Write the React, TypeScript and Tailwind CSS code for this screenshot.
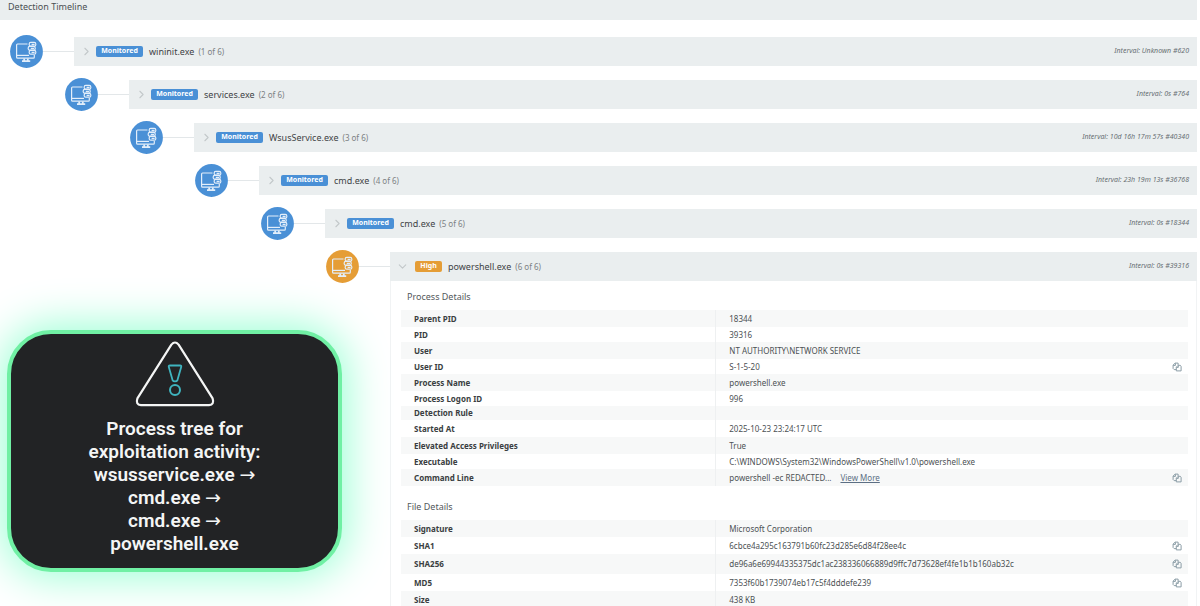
import { LuChevronDown, LuChevronRight } from "react-icons/lu";

const processes = [
    { name: "wininit.exe", interval: "Interval: Unknown #620", indent: "pl-[10px]", level: "Monitored" },
    { name: "services.exe", interval: "Interval: 0s #764", indent: "pl-[65px]", level: "Monitored" },
    { name: "WsusService.exe", interval: "Interval: 10d 16h 17m 57s #40340", indent: "pl-[130px]", level: "Monitored" },
    { name: "cmd.exe", interval: "Interval: 23h 19m 13s #36768", indent: "pl-[195px]", level: "Monitored" },
    { name: "cmd.exe", interval: "Interval: 0s #18344", indent: "pl-[261px]", level: "Monitored" },
    { name: "powershell.exe", interval: "Interval: 0s #39316", indent: "pl-[326px]", level: "High" },
]

type Row = { label: string; value: string; height: string; copy?: boolean; more?: boolean }

const processDetails: Row[] = [
    { label: "Parent PID", value: "18344", height: "h-[17px]" },
    { label: "PID", value: "39316", height: "h-[15px]" },
    { label: "User", value: "NT AUTHORITY\\NETWORK SERVICE", height: "h-[17px]" },
    { label: "User ID", value: "S-1-5-20", height: "h-[15px]", copy: true },
    { label: "Process Name", value: "powershell.exe", height: "h-[17px]" },
    { label: "Process Logon ID", value: "996", height: "h-[15px]" },
    { label: "Detection Rule", value: "", height: "h-[14px]" },
    { label: "Started At", value: "2025-10-23 23:24:17 UTC", height: "h-[17px]" },
    { label: "Elevated Access Privileges", value: "True", height: "h-[17px]" },
    { label: "Executable", value: "C:\\WINDOWS\\System32\\WindowsPowerShell\\v1.0\\powershell.exe", height: "h-[15px]" },
    { label: "Command Line", value: "powershell -ec REDACTED...", height: "h-[17px]", copy: true, more: true },
]

const fileDetails: Row[] = [
    { label: "Signature", value: "Microsoft Corporation", height: "h-[17px]" },
    { label: "SHA1", value: "6cbce4a295c163791b60fc23d285e6d84f28ee4c", height: "h-[17px]", copy: true },
    { label: "SHA256", value: "de96a6e69944335375dc1ac238336066889d9ffc7d73628ef4fe1b1b160ab32c", height: "h-[20px]", copy: true },
    { label: "MD5", value: "7353f60b1739074eb17c5f4dddefe239", height: "h-[17px]", copy: true },
    { label: "Size", value: "438 KB", height: "h-[17px]" },
]

const ComputerIcon = ({ high }: { high: boolean }) => (
    <svg viewBox="0 0 33 33" className="w-[33px] h-[33px] shrink-0" fill="none">
        <circle cx="16.5" cy="16.5" r="16.4" fill={high ? "#e59d36" : "#4a90d6"} />
        <g stroke="#e3eefa" strokeWidth="1.2" strokeLinejoin="round">
            <path d="M17.5 9H7.5Q6.6 9 6.6 9.9V22.2Q6.6 23.2 7.6 23.2H23.3Q24.3 23.2 24.3 22.2V20" />
            <path d="M6.6 20.4H19" />
            <path d="M14.2 23.4V25.6M17.8 23.4V25.6M12 26.1H20.2" strokeWidth="1.8" />
            <rect x="19.2" y="7.4" width="6.6" height="3.8" rx="1.5" />
            <rect x="18.2" y="11.4" width="7" height="3.8" rx="1.5" />
            <rect x="19.2" y="15.4" width="6.6" height="3.8" rx="1.5" />
            <path d="M21.6 9.3H24.6M20.8 13.3H24M21.6 17.3H24.6" strokeWidth="1.2" />
        </g>
    </svg>
)

const CopyIcon = () => (
    <svg viewBox="0 0 10 10" className="w-[10px] h-[10px]" fill="none" stroke="#8b9da6" strokeWidth="1" strokeLinejoin="round">
        <path d="M4.2 7.6H2.2L1.1 6.5V3L3.2 1.1H6.1V3" />
        <path d="M1.2 3.4H3.4V1.2" />
        <path d="M4.3 5.2L6.2 3.3H8.2L9.1 4.2V8.9H4.3Z" />
        <path d="M4.4 5.4H6.3V3.4" />
    </svg>
)

const DetailTable = ({ rows }: { rows: Row[] }) => (
    <table className="w-full table-fixed border-collapse text-[8px] leading-[12px] text-[#4c5154]">
        <tbody>
            {rows.map((row) => (
                <tr key={row.label} className={`${row.height} odd:bg-[#f7f8f8]`}>
                    <th className="w-[40%] p-0 pl-[13px] text-left font-bold text-[#3a3e41] border-r border-r-[#eef0f1]">{row.label}</th>
                    <td className="p-0 pl-[13px] whitespace-nowrap">
                        {row.value}
                        {row.more && <a href="#" className="ml-[9px] text-[#5c6f84] underline">View More</a>}
                    </td>
                    <td className="w-[16px] p-0">
                        {row.copy && <button aria-label={`Copy ${row.label}`} className="block cursor-pointer"><CopyIcon /></button>}
                    </td>
                </tr>
            ))}
        </tbody>
    </table>
)

const Arrow = () => <span className="font-normal font-['DejaVu_Sans',sans-serif]">→</span>

const Callout = () => (
    <div className="absolute left-[7px] top-[330px] w-[335px] rounded-[44px] border-4 border-[#70f0a4] bg-[#222325] pt-[7px] pb-[13px] flex flex-col items-center shadow-[0_0_44px_4px_#96ffd2]">
        <svg viewBox="0 0 80 66" className="w-[80px] h-[66px]" fill="none" strokeLinejoin="round">
            <path d="M36.4 3.6Q40 -0.6 43.6 3.6L77.6 57.4Q79.6 63.6 74 64.1H6Q0.4 63.6 2.4 57.4Z" stroke="#f4f5f5" strokeWidth="2.2" />
            <path d="M34.9 24.5H45.1Q46.6 24.5 46.2 26L42.4 39.2Q41.8 40.3 40 40.3T37.6 39.2L33.8 26Q33.4 24.5 34.9 24.5Z" stroke="#3fb4bf" strokeWidth="1.8" />
            <circle cx="40" cy="49" r="5" stroke="#3fb4bf" strokeWidth="2" />
        </svg>
        <p className="mt-[10px] text-center text-[19px] leading-[23px] font-semibold text-[#f4f5f5] font-[Roboto,'Liberation_Sans',sans-serif]">
            Process tree for<br />
            exploitation activity:<br />
            wsusservice.exe <Arrow /><br />
            cmd.exe <Arrow /><br />
            cmd.exe <Arrow /><br />
            powershell.exe
        </p>
    </div>
)

const App = () => {
    return (
        <div className="relative w-full min-h-screen max-h-screen overflow-hidden bg-white pr-[3px] font-['Noto_Sans','Open_Sans',sans-serif]">
            <h1 className="h-[20px] bg-[#eaeeef] pl-[8px] pb-[6px] flex items-center text-[9px] text-[#4c5154]">Detection Timeline</h1>
            <div className="w-full flex flex-col gap-[14px] mt-[17px]">
                {processes.map((process, index) => {
                    const high = process.level === "High"
                    return (
                        <div key={index} className={`w-full h-[29px] flex items-center ${process.indent}`}>
                            <ComputerIcon high={high} />
                            <span className="w-[31px] h-px bg-[#e3e7e9]"></span>
                            <button aria-expanded={high} className="flex-1 h-full flex items-center bg-[#eaeeef] pl-[6px] pr-[8px] cursor-pointer">
                                {high
                                    ? <LuChevronDown className="text-[13px] text-[#c3c8ca]" />
                                    : <LuChevronRight className="text-[13px] text-[#c3c8ca]" />}
                                <span className={`h-[11px] flex items-center justify-center rounded-[2px] text-[7px] font-bold text-white ${high ? "ml-[6px] w-[27px] bg-[#e59d36]" : "ml-[3px] w-[47px] bg-[#4a90d6]"}`}>{process.level}</span>
                                <span className="ml-[6px] text-[9px] text-[#3f4346]">{process.name}</span>
                                <span className="ml-[4px] text-[8px] text-[#7c8184]">({index + 1} of 6)</span>
                                <span className="ml-auto text-[7px] italic text-[#686f73]">{process.interval}</span>
                            </button>
                        </div>
                    )
                })}
            </div>
            <div className="ml-[390px] border-x border-[#f1f3f4] pl-[10px] pr-[8px]">
                <h2 className="pl-[6px] pt-[9px] pb-[6px] text-[9px] leading-[14px] text-[#53585b]">Process Details</h2>
                <DetailTable rows={processDetails} />
                <h2 className="pl-[6px] pt-[14px] pb-[6px] text-[9px] leading-[14px] text-[#53585b]">File Details</h2>
                <DetailTable rows={fileDetails} />
            </div>
            <Callout />
        </div>
    )
}

export default App
